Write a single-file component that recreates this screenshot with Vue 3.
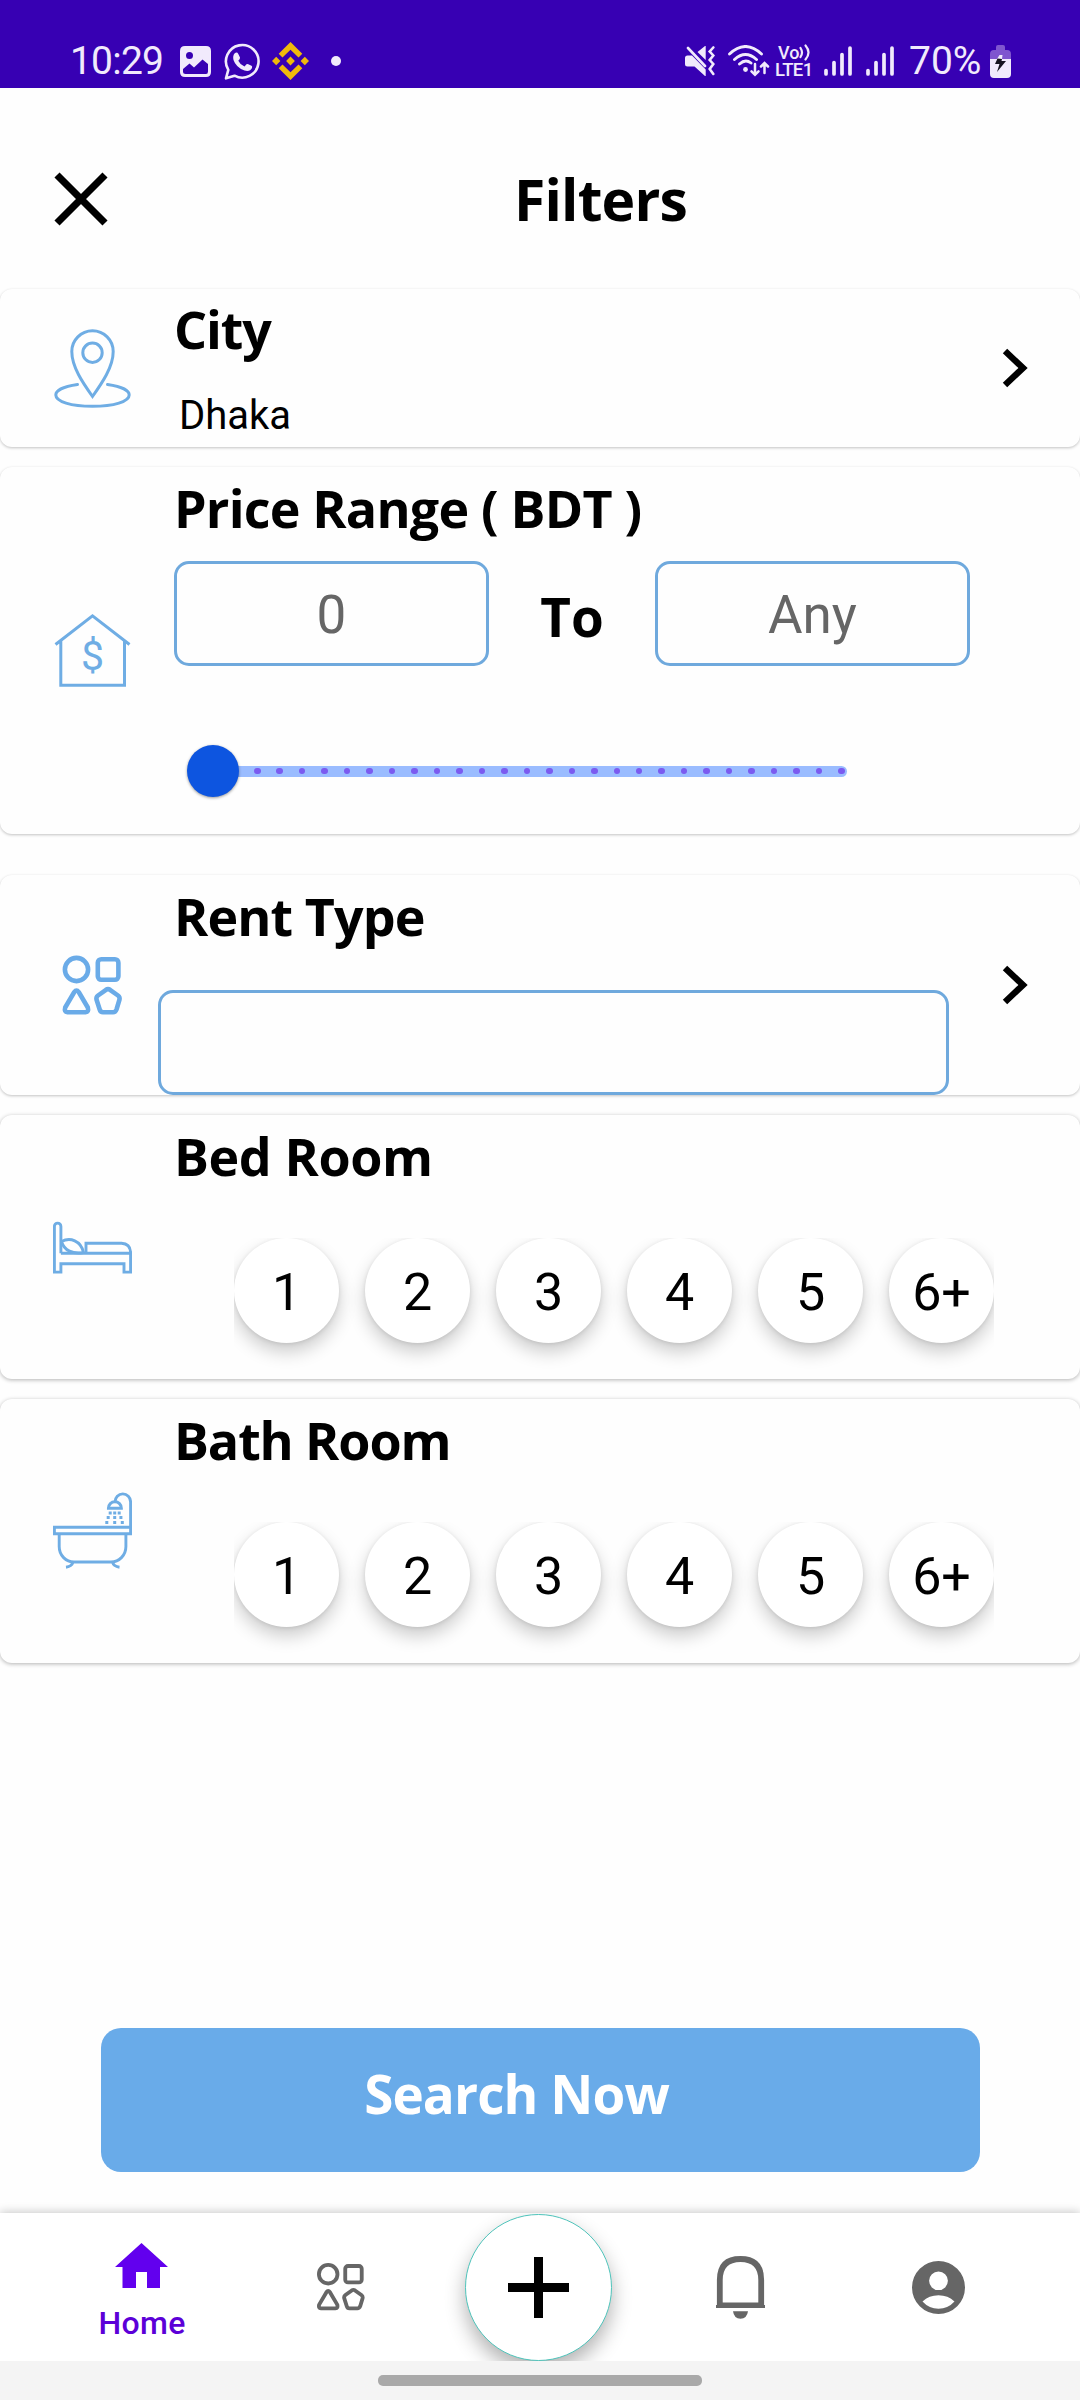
<script setup>
const counts = ['1', '2', '3', '4', '5', '6+']
const rooms = [
  { name: 'Bed Room', icon: 'bed' },
  { name: 'Bath Room', icon: 'bath' },
]
const ticks = Array.from({ length: 27 }, (_, i) => i)
const signals = [0, 1]
</script>

<template>
  <div class="screen">
    <header class="status">
      <span class="clock">10:29</span>
      <svg class="s-gallery" width="31" height="31" viewBox="0 0 31 31">
        <path fill="#f1eafc" fill-rule="evenodd" d="M5 0H26Q31 0 31 5V26Q31 31 26 31H5Q0 31 0 26V5Q0 0 5 0ZM9.500 6A3.500 3.500 0 1 0 9.500 13A3.500 3.500 0 1 0 9.500 6ZM3 23V26Q3 28 5.500 28H26Q28 28 28 25.500V18L22.500 13.500L14 21.500L9.500 17.500Z" />
      </svg>
      <svg class="s-whatsapp" width="37" height="37" viewBox="0 0 37 37">
        <path fill="none" stroke="#f1eafc" stroke-width="2.600" stroke-linejoin="round" d="M2 35.300L4.300 26.800A16.300 16.300 0 1 1 10.500 32.700Z" />
        <path fill="#f1eafc" d="M10.500 10.500Q13 8.500 14.300 11L16 14.500Q16.300 16 14.300 17.700Q16 21.500 20.500 23.500L22.500 21.300Q23.300 20.700 24.300 21.200L27.500 22.700Q28.500 23.300 28 25Q26 29 20.500 27.500Q12 24.500 9.500 17Q8.500 13 10.500 10.500Z" />
      </svg>
      <svg class="s-diamond" width="37" height="38" viewBox="0 0 37 38">
        <g fill="#f0b90b">
          <path d="M18.500 0L30.300 11.800L26.500 15.600L18.500 7.800L10.500 15.600L6.700 11.800Z" />
          <path d="M18.500 38L30.300 26.200L26.500 22.400L18.500 30.200L10.500 22.400L6.700 26.200Z" />
          <path d="M18.500 14.600L22.900 19L18.500 23.400L14.100 19Z" />
          <path d="M4.200 14.800L8.400 19L4.200 23.200L0 19Z" />
          <path d="M32.800 14.800L37 19L32.800 23.200L28.600 19Z" />
        </g>
      </svg>
      <i class="s-dot"></i>
      <span class="grow"></span>
      <svg class="s-mute" width="30" height="30" viewBox="0 0 30 30">
        <path fill="#f1eafc" d="M2.500 9.500H7L20.700 23.500V30H20L9.500 20.500H2.500Q0 20.500 0 18V12Q0 9.500 2.500 9.500ZM12.500 6L20 0H20.700V14Z" />
        <path fill="none" stroke="#f1eafc" stroke-width="2.600" stroke-linecap="round" d="M3 2L20 20M28.300 1.500L24.700 5.500L28.300 9.500L24.700 14L28.300 18L24.700 23L28.300 28" />
      </svg>
      <svg class="s-wifi" width="42" height="32" viewBox="0 0 42 32">
        <g fill="none" stroke="#f1eafc" stroke-width="2.900" stroke-linecap="round">
          <path d="M1.500 9Q17.500 -6 33.500 9M6.500 14.500Q17.500 4.500 28.500 14.500M11.500 19Q17.500 13.500 23 18" />
          <path stroke-width="2.500" d="M27 19V29M23.500 26.300L27 29.800L30.500 26.300M36.500 28V19M33 21.500L36.500 18L40 21.500" />
        </g>
        <circle cx="17.500" cy="24.500" r="2.400" fill="#f1eafc" />
      </svg>
      <div class="s-volte">
        <div class="vo">
          <span>Vo</span>
          <svg width="12" height="17" viewBox="0 0 12 17">
            <path fill="none" stroke="#f1eafc" stroke-width="2.200" stroke-linecap="round" d="M1.500 4Q4.500 8.500 1.500 13M6.500 1.500Q12.500 8.500 6.500 15.500" />
          </svg>
        </div>
        <span class="lte">LTE1</span>
      </div>
      <svg v-for="s in signals" :key="s" class="s-signal" width="28" height="30" viewBox="0 0 28 30">
        <path stroke="#f1eafc" stroke-width="3.700" stroke-linecap="round" d="M2 24.500V28M10 16.500V28M18 8.500V28M26 2V28" />
      </svg>
      <span class="percent">70%</span>
      <svg class="s-battery" width="21" height="33" viewBox="0 0 21 33">
        <path fill="#7f55cf" d="M6 2Q6 0 8 0H13Q15 0 15 2V5H17Q21 5 21 9V15H0V9Q0 5 4 5H6Z" />
        <path fill="#f1eafc" d="M0 14H7L9.500 10H12.500L12 14H21V29Q21 33 17 33H4Q0 33 0 29Z" />
        <path fill="#161320" d="M7.500 13.500L5 19H9.500L7 27L16 16H11.500L12 14Z" />
      </svg>
    </header>

    <div class="appbar">
      <svg class="close" width="54" height="54" viewBox="0 0 54 54">
        <path stroke="#000" stroke-width="7.200" d="M3 3L51 51M51 3L3 51" />
      </svg>
      <h1>Filters</h1>
    </div>

    <section class="card city">
      <svg class="icon" viewBox="0 0 79 79">
        <g fill="none" stroke="#6fade4" stroke-width="3" stroke-linecap="round">
          <path d="M39.500 67.500C30 54 18.800 38 18.800 22.500A20.700 20.700 0 0 1 60.200 22.500C60.200 38 49 54 39.500 67.500Z" />
          <circle cx="39.500" cy="23.700" r="9.700" />
          <path d="M24.500 55.500C10 57.500 2.800 61.500 2.800 66C2.800 72.500 18 77.300 39.500 77.300S76.200 72.500 76.200 66C76.200 61.500 69 57.500 54.500 55.500" />
        </g>
      </svg>
      <div class="body">
        <h2 class="t-city">City</h2>
        <p>Dhaka</p>
      </div>
      <svg class="chevron" width="26" height="40" viewBox="0 0 26 40">
        <path fill="none" stroke="#000" stroke-width="6.400" d="M3 3L21 20L3 37" />
      </svg>
    </section>

    <section class="card price">
      <svg class="icon" viewBox="0 0 79 79">
        <g fill="none" stroke="#6fade4" stroke-width="3">
          <path d="M2.500 33.500L39.500 4.800L76.500 33.500M7.800 30V74.300H71.500V30" />
        </g>
        <text x="39.500" y="58.500" text-anchor="middle" class="dollar">$</text>
      </svg>
      <div class="body">
        <h2>Price Range ( BDT )</h2>
        <div class="range">
          <div class="field">0</div>
          <div class="to">To</div>
          <div class="field">Any</div>
        </div>
        <div class="slider">
          <div class="track"><i v-for="t in ticks" :key="t"></i></div>
          <b class="thumb"></b>
        </div>
      </div>
    </section>

    <section class="card rent">
      <svg class="icon" viewBox="-9.500 -9.500 79 79">
        <g fill="none" stroke="#6aabe8" stroke-width="4.600" stroke-linejoin="round">
          <circle cx="14" cy="14" r="11.600" />
          <rect x="35.300" y="3.700" width="20.600" height="20.600" rx="3.500" />
          <path d="M11.800 36.500Q14 33.500 16.200 36.500L25.300 52Q26.500 56.500 23 56.700H5Q1.500 56.500 2.700 52Z" />
          <path d="M43.500 34.300Q45.500 33 47.500 34.300L55.500 40Q57.500 41.500 57 44L54 54Q53 56.700 50.500 56.700H40.500Q38 56.700 37.200 54L34 44Q33.500 41.500 35.500 40Z" />
        </g>
      </svg>
      <div class="body">
        <h2 class="t-rent">Rent Type</h2>
        <div class="field wide"></div>
      </div>
      <svg class="chevron" width="26" height="40" viewBox="0 0 26 40">
        <path fill="none" stroke="#000" stroke-width="6.400" d="M3 3L21 20L3 37" />
      </svg>
    </section>

    <section v-for="room in rooms" :key="room.name" class="card room">
      <svg v-if="room.icon === 'bed'" class="icon" viewBox="0 -13.500 79 79">
        <g fill="none" stroke="#6fade4" stroke-width="2.900">
          <path d="M7.900 31.700V5A3.250 3.400 0 0 0 1.400 5V50.600H7.900V42.300H71V50.600H77.600V31.700H7.900" />
          <path d="M33 31.700V21.700H68.500Q77.600 22 77.600 31.700" />
          <path d="M8.500 20C17 15.500 28 19 30.500 31C20 33 11 29 8.500 20Z" />
        </g>
      </svg>
      <svg v-else class="icon" viewBox="0 -0.500 79 79">
        <g fill="none" stroke="#6fade4" stroke-width="2.900">
          <path d="M77.600 34.700H1.400V41.200H77.600V9.500A7.700 8 0 0 0 62 9.500" />
          <path d="M55.400 15.700H68.400A6.500 6.500 0 0 0 55.400 15.700Z" />
          <path d="M6.200 41V54C6.200 63 13 69.500 21 69.500H58C66 69.500 72.900 63 72.900 54V41" />
          <path d="M20 69.500Q19 74 13 74.700M59.500 69.500Q60.500 74 66.500 74.700" />
        </g>
        <path fill="#6fade4" d="M55.700 18.900h3v3h-3zM60.200 18.900h3v3h-3zM64.700 18.900h3v3h-3zM53.700 23.500h3v3h-3zM60.200 23.500h3v3h-3zM66.400 23.500h3v3h-3zM52.300 28.500h3v3h-3zM60.200 28.500h3v3h-3zM67.800 28.500h3v3h-3z" />
      </svg>
      <div class="body">
        <h2 :class="'t-' + room.icon">{{ room.name }}</h2>
        <div class="counts">
          <div v-for="n in counts" :key="n" class="count">{{ n }}</div>
        </div>
      </div>
    </section>

    <div class="search">Search Now</div>

    <nav>
      <div class="item home">
        <svg width="53" height="45" viewBox="0 0 53 45">
          <path fill="#6200ee" d="M26.500 0L53 24H45V45H32V29H21V45H7.500V24H0Z" />
        </svg>
        <span>Home</span>
      </div>
      <div class="item">
        <svg width="48" height="48" viewBox="0 0 60 60">
          <g fill="none" stroke="#666" stroke-width="4.800" stroke-linejoin="round">
            <circle cx="14" cy="14" r="11.600" />
            <rect x="35.300" y="3.700" width="20.600" height="20.600" rx="3.500" />
            <path d="M11.800 36.500Q14 33.500 16.200 36.500L25.300 52Q26.500 56.500 23 56.700H5Q1.500 56.500 2.700 52Z" />
            <path d="M43.500 34.300Q45.500 33 47.500 34.300L55.500 40Q57.500 41.500 57 44L54 54Q53 56.700 50.500 56.700H40.500Q38 56.700 37.200 54L34 44Q33.500 41.500 35.500 40Z" />
          </g>
        </svg>
      </div>
      <div class="item add">
        <div class="fab">
          <svg width="61" height="61" viewBox="0 0 61 61">
            <path stroke="#000" stroke-width="9" d="M0 30.500H61M30.500 0V61" />
          </svg>
        </div>
      </div>
      <div class="item bell">
        <svg width="49" height="63" viewBox="0 0 49 63">
          <path fill="none" stroke="#666" stroke-width="5.800" d="M3.800 51V24Q3.800 3 24.500 3Q45.200 3 45.200 24V51" />
          <path fill="#666" d="M0 49H1V46.500H48V49H49V52H0ZM17 55.300H32Q31 62.700 24.500 62.700Q18 62.700 17 55.300Z" />
        </svg>
      </div>
      <div class="item">
        <svg width="53" height="53" viewBox="0 0 53 53">
          <path fill="#666" fill-rule="evenodd" d="M26.500 0A26.500 26.500 0 1 0 26.500 53A26.500 26.500 0 1 0 26.500 0ZM26.500 10.500A9.400 9.300 0 1 1 26.500 29.100A9.400 9.300 0 1 1 26.500 10.500ZM10.500 40.500Q17 34.300 26.500 34.300T42.500 40.500Q36 47.700 26.500 47.700T10.500 40.500Z" />
        </svg>
      </div>
    </nav>
    <div class="gesture"><i></i></div>
  </div>
</template>

<style>
body {
  margin: 0;
  background: #fff;
}
</style>

<style scoped>
.screen {
  width: 1080px;
  height: 2400px;
  display: flex;
  flex-direction: column;
  background: #fefefe;
  color: #000;
  font-family: Roboto, sans-serif;
  overflow: hidden;
}
.screen * {
  box-sizing: border-box;
  flex-shrink: 0;
}
svg {
  display: block;
}
h1,
h2,
p {
  margin: 0;
  white-space: nowrap;
}
.status {
  height: 88px;
  padding: 34px 69px 0 70px;
  display: flex;
  align-items: center;
  background: #3700b3;
  color: #f1eafc;
  font-size: 39px;
  line-height: 40px;
}
.clock {
  width: 110px;
  letter-spacing: -0.8px;
}
.s-whatsapp {
  margin-left: 13px;
}
.s-diamond {
  margin-left: 11px;
}
.s-dot {
  width: 10px;
  height: 10px;
  margin-left: 22px;
  border-radius: 50%;
  background: #f1eafc;
}
.grow {
  flex: 1;
}
.s-wifi {
  margin-left: 13px;
}
.s-volte {
  width: 39px;
  height: 34px;
  margin: 0 10px 0 5px;
  font-weight: 500;
}
.vo {
  height: 17px;
  padding-left: 3px;
  display: flex;
  align-items: center;
  font-size: 18px;
  line-height: 17px;
}
.lte {
  display: block;
  font-size: 18.500px;
  line-height: 18px;
  letter-spacing: -0.6px;
}
.s-signal + .s-signal {
  margin-left: 14px;
}
.percent {
  width: 81px;
  margin-left: 15px;
}
.appbar {
  height: 201px;
  padding-left: 54px;
  padding-top: 20px;
  display: flex;
  align-items: flex-start;
}
.close {
  margin-top: 64px;
}
h1 {
  margin: 59px 0 0 406px;
  font: 700 57px/64px "Open Sans", sans-serif;
  letter-spacing: -0.8px;
}
h2 {
  margin: 1px 0 -1px;
  font: 700 52px/60px "Open Sans", sans-serif;
  letter-spacing: -0.8px;
}
.t-city {
  letter-spacing: -1.1px;
}
.t-rent {
  letter-spacing: -0.9px;
}
.t-bed {
  letter-spacing: -0.4px;
}
.t-bath {
  letter-spacing: -1.1px;
}
.card {
  display: flex;
  align-items: center;
  padding-left: 53px;
  border-radius: 12px;
  background: #fefefe;
  box-shadow: 0 1px 3px rgba(0, 0, 0, 0.24);
}
.icon {
  width: 79px;
  height: 79px;
}
.body {
  width: 796px;
  align-self: stretch;
  margin-left: 42px;
  padding-top: 10px;
}
.chevron {
  margin-left: 32px;
}
.city {
  height: 158px;
}
.city .body {
  padding-top: 9px;
}
.city p {
  margin: 34px 0 0 5px;
  font-size: 40px;
  line-height: 48px;
}
.price {
  height: 367px;
  margin-top: 20px;
}
.dollar {
  font: 400 41px Roboto, sans-serif;
  fill: #6fade4;
}
.range {
  display: flex;
  margin-top: 24px;
}
.field {
  width: 315px;
  height: 105px;
  padding-top: 3px;
  display: flex;
  align-items: center;
  justify-content: center;
  border: 3px solid #6fa9dd;
  border-radius: 15px;
  color: #666;
  font-size: 53px;
  line-height: 60px;
}
.to {
  width: 166px;
  padding-top: 7px;
  text-align: center;
  font: 700 53px/98px "Open Sans", sans-serif;
}
.slider {
  position: relative;
  height: 52px;
  margin: 79px 0 0 39px;
  display: flex;
  align-items: center;
}
.track {
  width: 634px;
  height: 11px;
  padding: 0 2px 0 41px;
  display: flex;
  align-items: center;
  justify-content: space-between;
  border-radius: 6px;
  background: #9abcff;
}
.track i {
  width: 6.500px;
  height: 6.500px;
  border-radius: 50%;
  background: #7b5bf0;
}
.thumb {
  position: absolute;
  left: -26px;
  top: 0;
  width: 52px;
  height: 52px;
  border-radius: 50%;
  background: #0d55e0;
  box-shadow: 0 1px 3px rgba(0, 0, 0, 0.4);
}
.rent {
  height: 220px;
  margin-top: 41px;
}
.wide {
  width: 791px;
  margin: 45px 0 0 -16px;
}
.room {
  height: 264px;
  margin-top: 20px;
  box-shadow: 0 1px 4px rgba(0, 0, 0, 0.3);
}
.counts {
  width: 760px;
  margin: 53px 0 0 60px;
  display: flex;
  gap: 26px;
  clip-path: inset(0 0 -36px 0);
}
.count {
  width: 105px;
  height: 105px;
  padding: 4px 0 0 0;
  display: flex;
  align-items: center;
  justify-content: center;
  border-radius: 50%;
  background: #fff;
  box-shadow: 0 9px 18px rgba(0, 0, 0, 0.2), 0 1px 4px rgba(0, 0, 0, 0.1);
  font-size: 52px;
  line-height: 60px;
}
.search {
  width: 879px;
  height: 144px;
  margin: 365px 0 0 101px;
  padding: 0 48px 12px 0;
  display: flex;
  align-items: center;
  justify-content: center;
  border-radius: 20px;
  background: #69abe9;
  color: #fff;
  font: 700 53px/60px "Open Sans", sans-serif;
  letter-spacing: -0.9px;
}
nav {
  height: 148px;
  margin-top: 41px;
  padding: 0 42px;
  display: flex;
  background: #fff;
  box-shadow: 0 -1px 9px rgba(0, 0, 0, 0.22);
}
.item {
  width: 199.200px;
  display: flex;
  align-items: center;
  justify-content: center;
}
.home {
  flex-direction: column;
  justify-content: flex-start;
  padding-top: 30px;
  color: #5c00d8;
  font: 500 32px/40px Roboto, sans-serif;
}
.home span {
  margin: 15px 0 0 1px;
  letter-spacing: 0.3px;
}
.add {
  overflow: hidden;
  padding-right: 3px;
}
.fab {
  width: 147px;
  height: 147px;
  margin-top: 1px;
  display: flex;
  align-items: center;
  justify-content: center;
  border: 1.500px solid #4fc4bb;
  border-radius: 50%;
  background: #fff;
  box-shadow: 0 10px 20px rgba(0, 0, 0, 0.3);
}
.bell {
  padding-left: 3px;
}
.gesture {
  height: 39px;
  padding-top: 14px;
  background: #f4f4f4;
}
.gesture i {
  display: block;
  width: 324px;
  height: 11px;
  margin-left: 378px;
  border-radius: 5px;
  background: #a9a9a9;
}
</style>
